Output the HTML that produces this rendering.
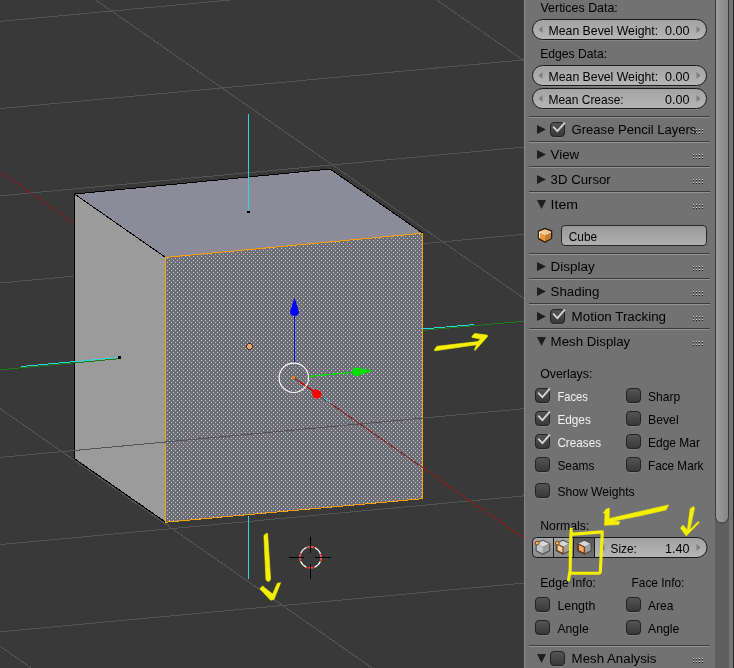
<!DOCTYPE html>
<html><head><meta charset="utf-8"><style>
html,body{margin:0;padding:0;background:#393939;overflow:hidden}
svg{display:block;will-change:transform}
text{font-family:"Liberation Sans",sans-serif}
</style></head><body>
<svg width="734" height="668" viewBox="0 0 734 668">
<g shape-rendering="crispEdges">
<rect x="0" y="0" width="524" height="668" fill="#393939"/>
<line x1="0.00" y1="21.40" x2="524.00" y2="-27.33" stroke="#545454" stroke-width="1"/>
<line x1="0.00" y1="108.60" x2="524.00" y2="59.87" stroke="#545454" stroke-width="1"/>
<line x1="0.00" y1="195.80" x2="524.00" y2="147.07" stroke="#545454" stroke-width="1"/>
<line x1="0.00" y1="283.00" x2="524.00" y2="234.27" stroke="#545454" stroke-width="1"/>
<line x1="0.00" y1="457.40" x2="524.00" y2="408.67" stroke="#545454" stroke-width="1"/>
<line x1="0.00" y1="544.60" x2="524.00" y2="495.87" stroke="#545454" stroke-width="1"/>
<line x1="0.00" y1="631.80" x2="524.00" y2="583.07" stroke="#545454" stroke-width="1"/>
<line x1="-927.20" y1="0.00" x2="77.10" y2="700.00" stroke="#545454" stroke-width="1"/>
<line x1="-586.20" y1="0.00" x2="418.10" y2="700.00" stroke="#545454" stroke-width="1"/>
<line x1="95.80" y1="0.00" x2="1100.10" y2="700.00" stroke="#545454" stroke-width="1"/>
<line x1="436.80" y1="0.00" x2="1441.10" y2="700.00" stroke="#545454" stroke-width="1"/>
<line x1="0.00" y1="171.50" x2="300.00" y2="380.60" stroke="#7a1f1f" stroke-width="1"/>
<line x1="0.00" y1="369.80" x2="119.50" y2="358.70" stroke="#1f7a1f" stroke-width="1"/>
<line x1="422.40" y1="330.40" x2="524.00" y2="321.20" stroke="#1f7a1f" stroke-width="1"/>
<polygon points="74.50,194.00 330.00,169.00 422.80,233.20 165.60,257.40" fill="#8b8b99" stroke="#000" stroke-width="1" stroke-linejoin="round"/>
<polygon points="74.50,194.00 165.60,257.40 165.60,522.20 74.70,458.80" fill="#9b9b9b" stroke="#000" stroke-width="1" stroke-linejoin="round"/>
<defs><pattern id="stip" x="0" y="0" width="4" height="4" patternUnits="userSpaceOnUse"><rect x="0" y="0" width="4" height="4" fill="#6d6e76"/><rect x="1" y="0" width="1" height="1" fill="#c6c6cc"/><rect x="3" y="2" width="1" height="1" fill="#c6c6cc"/></pattern></defs>
<polygon points="165.60,257.40 422.80,233.20 422.80,498.70 165.60,522.20" fill="url(#stip)" stroke="#ffa000" stroke-width="1" stroke-linejoin="round"/>
<line x1="0.00" y1="369.80" x2="119.50" y2="358.70" stroke="#1f7a1f" stroke-width="1"/>
<line x1="0.00" y1="457.40" x2="524.00" y2="408.67" stroke="#545454" stroke-width="1"/>
<line x1="294.00" y1="378.00" x2="524.00" y2="538.31" stroke="#8a1f1f" stroke-width="1"/>
<line x1="248.50" y1="212.00" x2="248.50" y2="113.50" stroke="#33d6d6" stroke-width="1"/>
<line x1="118.50" y1="357.50" x2="21.50" y2="366.50" stroke="#33d6d6" stroke-width="1"/>
<line x1="422.50" y1="329.00" x2="474.50" y2="324.50" stroke="#33d6d6" stroke-width="1"/>
<line x1="248.50" y1="516.00" x2="248.50" y2="578.50" stroke="#33d6d6" stroke-width="1"/>
<line x1="322.80" y1="397.30" x2="330.00" y2="402.60" stroke="#33d6d6" stroke-width="1"/>
<rect x="247" y="211" width="3" height="2" fill="#000"/>
<rect x="118" y="356" width="3" height="3" fill="#000"/>
<circle cx="249.4" cy="346.6" r="3" fill="#e8a868" stroke="#3a2a1a" stroke-width="0.9"/>
<line x1="294.50" y1="364.00" x2="294.50" y2="312.00" stroke="#0000ff" stroke-width="1.3"/>
<path d="M294.5 297.5 L290.2 311.5 Q290 315.8 294.5 315.8 Q299 315.8 298.8 311.5 Z" fill="#0000ff" shape-rendering="auto"/>
<line x1="309.00" y1="376.40" x2="356.00" y2="372.00" stroke="#00e000" stroke-width="1.3"/>
<path d="M373.5 370.5 L356 367.6 Q352 367.8 352.3 372.2 Q352.8 376.6 356.8 376.2 Z" fill="#00e000" shape-rendering="auto"/>
<line x1="299.70" y1="381.60" x2="317.00" y2="393.80" stroke="#d00000" stroke-width="1.3"/>
<path d="M312.5 389.8 Q317 389 320.8 391.5 Q322.5 395 320 397.8 Q316.5 399.5 313.5 397.5 Q311.5 394 312.5 389.8 Z" fill="#ff0000" shape-rendering="auto"/>
<circle cx="293.8" cy="377.8" r="14.7" fill="none" stroke="#ffffff" stroke-width="1.1" shape-rendering="auto"/>
<rect x="292.3" y="376.3" width="3" height="3" fill="#f08000"/>
<circle cx="310.5" cy="557.4" r="10.6" fill="none" stroke="#ffffff" stroke-width="1.1" shape-rendering="auto"/>
<circle cx="310.5" cy="557.4" r="10.6" fill="none" stroke="#ff0000" stroke-width="1.1" stroke-dasharray="8.325 8.325" stroke-dashoffset="4.16" shape-rendering="auto"/>
<line x1="310.50" y1="537.00" x2="310.50" y2="552.50" stroke="#000" stroke-width="1.2"/>
<line x1="310.50" y1="563.50" x2="310.50" y2="579.00" stroke="#000" stroke-width="1.2"/>
<line x1="289.00" y1="557.40" x2="304.00" y2="557.40" stroke="#000" stroke-width="1.2"/>
<line x1="315.00" y1="557.40" x2="331.00" y2="557.40" stroke="#000" stroke-width="1.2"/>
</g>
<polygon points="434.20,350.00 436.90,346.30 477.60,341.60 480.60,339.10 472.10,337.40 471.90,336.40 474.60,333.40 487.20,335.10 487.60,336.40 475.00,350.60 474.40,349.80 476.50,344.80 435.10,350.80" fill="#f5f000" stroke="#f5f000" stroke-width="0.6" stroke-linejoin="round"/>
<polygon points="263.90,535.50 266.00,533.60 267.60,533.40 270.60,578.50 269.80,580.90 267.60,581.40 265.90,579.50" fill="#f5f000" stroke="#f5f000" stroke-width="0.6" stroke-linejoin="round"/>
<polygon points="259.80,588.70 262.50,586.00 272.60,594.10 277.30,583.30 280.70,582.70 274.00,599.50 270.60,600.20" fill="#f5f000" stroke="#f5f000" stroke-width="0.6" stroke-linejoin="round"/>
<rect x="524" y="0" width="210" height="668" fill="#727272"/>
<rect x="524" y="0" width="1" height="668" fill="#8a8a8a"/>
<defs><linearGradient id="gnum" x1="0" y1="0" x2="0" y2="1"><stop offset="0" stop-color="#a2a2a2"/><stop offset="1" stop-color="#b6b6b6"/></linearGradient><linearGradient id="gopt" x1="0" y1="0" x2="0" y2="1"><stop offset="0" stop-color="#555555"/><stop offset="1" stop-color="#383838"/></linearGradient><linearGradient id="gtxt" x1="0" y1="0" x2="0" y2="1"><stop offset="0" stop-color="#999999"/><stop offset="1" stop-color="#b0b0b0"/></linearGradient><linearGradient id="gtool" x1="0" y1="0" x2="0" y2="1"><stop offset="0" stop-color="#a8a8a8"/><stop offset="1" stop-color="#8a8a8a"/></linearGradient><linearGradient id="gtsel" x1="0" y1="0" x2="0" y2="1"><stop offset="0" stop-color="#575757"/><stop offset="1" stop-color="#737373"/></linearGradient><linearGradient id="gscr" x1="0" y1="0" x2="1" y2="0"><stop offset="0" stop-color="#9c9c9c"/><stop offset="1" stop-color="#868686"/></linearGradient></defs>
<text x="540.50" y="12.00" fill="#000" font-size="12.4" textLength="77.33" lengthAdjust="spacingAndGlyphs">Vertices Data:</text>
<rect x="541" y="40" width="157" height="1" fill="#878787"/>
<rect x="532.5" y="19.5" width="174" height="20" rx="10" fill="url(#gnum)" stroke="#191919" stroke-width="1"/>
<polygon points="543.00,29.50 538.00,29.50 543.00,29.50" fill="none" stroke="none" stroke-width="1" />
<polygon points="542.50,26.00 542.50,33.00 538.50,29.50" fill="#7e7e7e" stroke="none" stroke-width="1" />
<polygon points="696.50,26.00 696.50,33.00 700.50,29.50" fill="#7e7e7e" stroke="none" stroke-width="1" />
<text x="548.50" y="34.50" fill="#000" font-size="12.4" textLength="109.64" lengthAdjust="spacingAndGlyphs">Mean Bevel Weight:</text>
<text x="665.00" y="34.50" fill="#000" font-size="12.4" textLength="24.50" lengthAdjust="spacingAndGlyphs">0.00</text>
<text x="540.20" y="58.00" fill="#000" font-size="12.4" textLength="66.88" lengthAdjust="spacingAndGlyphs">Edges Data:</text>
<rect x="541" y="86" width="157" height="1" fill="#878787"/>
<rect x="532.5" y="65.5" width="174" height="20" rx="10" fill="url(#gnum)" stroke="#191919" stroke-width="1"/>
<polygon points="543.00,75.50 538.00,75.50 543.00,75.50" fill="none" stroke="none" stroke-width="1" />
<polygon points="542.50,72.00 542.50,79.00 538.50,75.50" fill="#7e7e7e" stroke="none" stroke-width="1" />
<polygon points="696.50,72.00 696.50,79.00 700.50,75.50" fill="#7e7e7e" stroke="none" stroke-width="1" />
<text x="548.50" y="80.50" fill="#000" font-size="12.4" textLength="109.64" lengthAdjust="spacingAndGlyphs">Mean Bevel Weight:</text>
<text x="665.00" y="80.50" fill="#000" font-size="12.4" textLength="24.50" lengthAdjust="spacingAndGlyphs">0.00</text>
<rect x="541" y="109" width="157" height="1" fill="#878787"/>
<rect x="532.5" y="88.5" width="174" height="20" rx="10" fill="url(#gnum)" stroke="#191919" stroke-width="1"/>
<polygon points="543.00,98.50 538.00,98.50 543.00,98.50" fill="none" stroke="none" stroke-width="1" />
<polygon points="542.50,95.00 542.50,102.00 538.50,98.50" fill="#7e7e7e" stroke="none" stroke-width="1" />
<polygon points="696.50,95.00 696.50,102.00 700.50,98.50" fill="#7e7e7e" stroke="none" stroke-width="1" />
<text x="548.50" y="103.50" fill="#000" font-size="12.4" textLength="75.12" lengthAdjust="spacingAndGlyphs">Mean Crease:</text>
<text x="665.00" y="103.50" fill="#000" font-size="12.4" textLength="24.50" lengthAdjust="spacingAndGlyphs">0.00</text>
<rect x="529" y="116" width="181" height="1" fill="#3c3c3c"/>
<rect x="529" y="117" width="181" height="1" fill="#939393"/>
<polygon points="537.00,125.00 537.00,134.00 546.00,129.50" fill="#1e1e1e" stroke="none" stroke-width="1" />
<rect x="553" y="137" width="9" height="1" fill="#828282"/>
<rect x="550.5" y="122.5" width="14" height="14" rx="3.5" fill="url(#gopt)" stroke="#222" stroke-width="1"/>
<path d="M553.6 127.2 L557.4 131.2 L564.4 123.1" fill="none" stroke="#d6d6d6" stroke-width="1.8" stroke-linecap="round"/>
<text x="571.60" y="134.00" fill="#000" font-size="13.52727272727273" textLength="124.78" lengthAdjust="spacingAndGlyphs">Grease Pencil Layers</text>
<rect x="693" y="129" width="1" height="1" fill="#d0d0d0"/>
<rect x="693" y="130" width="1" height="1" fill="#1a1a1a"/>
<rect x="693" y="132" width="1" height="1" fill="#d0d0d0"/>
<rect x="693" y="133" width="1" height="1" fill="#1a1a1a"/>
<rect x="696" y="129" width="1" height="1" fill="#d0d0d0"/>
<rect x="696" y="130" width="1" height="1" fill="#1a1a1a"/>
<rect x="696" y="132" width="1" height="1" fill="#d0d0d0"/>
<rect x="696" y="133" width="1" height="1" fill="#1a1a1a"/>
<rect x="699" y="129" width="1" height="1" fill="#d0d0d0"/>
<rect x="699" y="130" width="1" height="1" fill="#1a1a1a"/>
<rect x="699" y="132" width="1" height="1" fill="#d0d0d0"/>
<rect x="699" y="133" width="1" height="1" fill="#1a1a1a"/>
<rect x="702" y="129" width="1" height="1" fill="#d0d0d0"/>
<rect x="702" y="130" width="1" height="1" fill="#1a1a1a"/>
<rect x="702" y="132" width="1" height="1" fill="#d0d0d0"/>
<rect x="702" y="133" width="1" height="1" fill="#1a1a1a"/>
<rect x="529" y="141" width="181" height="1" fill="#3c3c3c"/>
<rect x="529" y="142" width="181" height="1" fill="#939393"/>
<polygon points="537.00,150.00 537.00,159.00 546.00,154.50" fill="#1e1e1e" stroke="none" stroke-width="1" />
<text x="550.60" y="159.00" fill="#000" font-size="13.52727272727273" textLength="28.47" lengthAdjust="spacingAndGlyphs">View</text>
<rect x="693" y="154" width="1" height="1" fill="#d0d0d0"/>
<rect x="693" y="155" width="1" height="1" fill="#1a1a1a"/>
<rect x="693" y="157" width="1" height="1" fill="#d0d0d0"/>
<rect x="693" y="158" width="1" height="1" fill="#1a1a1a"/>
<rect x="696" y="154" width="1" height="1" fill="#d0d0d0"/>
<rect x="696" y="155" width="1" height="1" fill="#1a1a1a"/>
<rect x="696" y="157" width="1" height="1" fill="#d0d0d0"/>
<rect x="696" y="158" width="1" height="1" fill="#1a1a1a"/>
<rect x="699" y="154" width="1" height="1" fill="#d0d0d0"/>
<rect x="699" y="155" width="1" height="1" fill="#1a1a1a"/>
<rect x="699" y="157" width="1" height="1" fill="#d0d0d0"/>
<rect x="699" y="158" width="1" height="1" fill="#1a1a1a"/>
<rect x="702" y="154" width="1" height="1" fill="#d0d0d0"/>
<rect x="702" y="155" width="1" height="1" fill="#1a1a1a"/>
<rect x="702" y="157" width="1" height="1" fill="#d0d0d0"/>
<rect x="702" y="158" width="1" height="1" fill="#1a1a1a"/>
<rect x="529" y="166" width="181" height="1" fill="#3c3c3c"/>
<rect x="529" y="167" width="181" height="1" fill="#939393"/>
<polygon points="537.00,175.00 537.00,184.00 546.00,179.50" fill="#1e1e1e" stroke="none" stroke-width="1" />
<text x="550.60" y="184.00" fill="#000" font-size="13.52727272727273" textLength="60.14" lengthAdjust="spacingAndGlyphs">3D Cursor</text>
<rect x="693" y="179" width="1" height="1" fill="#d0d0d0"/>
<rect x="693" y="180" width="1" height="1" fill="#1a1a1a"/>
<rect x="693" y="182" width="1" height="1" fill="#d0d0d0"/>
<rect x="693" y="183" width="1" height="1" fill="#1a1a1a"/>
<rect x="696" y="179" width="1" height="1" fill="#d0d0d0"/>
<rect x="696" y="180" width="1" height="1" fill="#1a1a1a"/>
<rect x="696" y="182" width="1" height="1" fill="#d0d0d0"/>
<rect x="696" y="183" width="1" height="1" fill="#1a1a1a"/>
<rect x="699" y="179" width="1" height="1" fill="#d0d0d0"/>
<rect x="699" y="180" width="1" height="1" fill="#1a1a1a"/>
<rect x="699" y="182" width="1" height="1" fill="#d0d0d0"/>
<rect x="699" y="183" width="1" height="1" fill="#1a1a1a"/>
<rect x="702" y="179" width="1" height="1" fill="#d0d0d0"/>
<rect x="702" y="180" width="1" height="1" fill="#1a1a1a"/>
<rect x="702" y="182" width="1" height="1" fill="#d0d0d0"/>
<rect x="702" y="183" width="1" height="1" fill="#1a1a1a"/>
<rect x="529" y="191" width="181" height="1" fill="#3c3c3c"/>
<rect x="529" y="192" width="181" height="1" fill="#939393"/>
<polygon points="537.00,200.00 546.00,200.00 541.50,209.00" fill="#1e1e1e" stroke="none" stroke-width="1" />
<text x="550.60" y="209.00" fill="#000" font-size="13.52727272727273" textLength="27.33" lengthAdjust="spacingAndGlyphs">Item</text>
<rect x="693" y="204" width="1" height="1" fill="#d0d0d0"/>
<rect x="693" y="205" width="1" height="1" fill="#1a1a1a"/>
<rect x="693" y="207" width="1" height="1" fill="#d0d0d0"/>
<rect x="693" y="208" width="1" height="1" fill="#1a1a1a"/>
<rect x="696" y="204" width="1" height="1" fill="#d0d0d0"/>
<rect x="696" y="205" width="1" height="1" fill="#1a1a1a"/>
<rect x="696" y="207" width="1" height="1" fill="#d0d0d0"/>
<rect x="696" y="208" width="1" height="1" fill="#1a1a1a"/>
<rect x="699" y="204" width="1" height="1" fill="#d0d0d0"/>
<rect x="699" y="205" width="1" height="1" fill="#1a1a1a"/>
<rect x="699" y="207" width="1" height="1" fill="#d0d0d0"/>
<rect x="699" y="208" width="1" height="1" fill="#1a1a1a"/>
<rect x="702" y="204" width="1" height="1" fill="#d0d0d0"/>
<rect x="702" y="205" width="1" height="1" fill="#1a1a1a"/>
<rect x="702" y="207" width="1" height="1" fill="#d0d0d0"/>
<rect x="702" y="208" width="1" height="1" fill="#1a1a1a"/>
<rect x="529" y="253" width="181" height="1" fill="#3c3c3c"/>
<rect x="529" y="254" width="181" height="1" fill="#939393"/>
<polygon points="537.00,262.00 537.00,271.00 546.00,266.50" fill="#1e1e1e" stroke="none" stroke-width="1" />
<text x="550.60" y="271.00" fill="#000" font-size="13.52727272727273" textLength="44.23" lengthAdjust="spacingAndGlyphs">Display</text>
<rect x="693" y="266" width="1" height="1" fill="#d0d0d0"/>
<rect x="693" y="267" width="1" height="1" fill="#1a1a1a"/>
<rect x="693" y="269" width="1" height="1" fill="#d0d0d0"/>
<rect x="693" y="270" width="1" height="1" fill="#1a1a1a"/>
<rect x="696" y="266" width="1" height="1" fill="#d0d0d0"/>
<rect x="696" y="267" width="1" height="1" fill="#1a1a1a"/>
<rect x="696" y="269" width="1" height="1" fill="#d0d0d0"/>
<rect x="696" y="270" width="1" height="1" fill="#1a1a1a"/>
<rect x="699" y="266" width="1" height="1" fill="#d0d0d0"/>
<rect x="699" y="267" width="1" height="1" fill="#1a1a1a"/>
<rect x="699" y="269" width="1" height="1" fill="#d0d0d0"/>
<rect x="699" y="270" width="1" height="1" fill="#1a1a1a"/>
<rect x="702" y="266" width="1" height="1" fill="#d0d0d0"/>
<rect x="702" y="267" width="1" height="1" fill="#1a1a1a"/>
<rect x="702" y="269" width="1" height="1" fill="#d0d0d0"/>
<rect x="702" y="270" width="1" height="1" fill="#1a1a1a"/>
<rect x="529" y="278" width="181" height="1" fill="#3c3c3c"/>
<rect x="529" y="279" width="181" height="1" fill="#939393"/>
<polygon points="537.00,287.00 537.00,296.00 546.00,291.50" fill="#1e1e1e" stroke="none" stroke-width="1" />
<text x="550.60" y="296.00" fill="#000" font-size="13.52727272727273" textLength="48.78" lengthAdjust="spacingAndGlyphs">Shading</text>
<rect x="693" y="291" width="1" height="1" fill="#d0d0d0"/>
<rect x="693" y="292" width="1" height="1" fill="#1a1a1a"/>
<rect x="693" y="294" width="1" height="1" fill="#d0d0d0"/>
<rect x="693" y="295" width="1" height="1" fill="#1a1a1a"/>
<rect x="696" y="291" width="1" height="1" fill="#d0d0d0"/>
<rect x="696" y="292" width="1" height="1" fill="#1a1a1a"/>
<rect x="696" y="294" width="1" height="1" fill="#d0d0d0"/>
<rect x="696" y="295" width="1" height="1" fill="#1a1a1a"/>
<rect x="699" y="291" width="1" height="1" fill="#d0d0d0"/>
<rect x="699" y="292" width="1" height="1" fill="#1a1a1a"/>
<rect x="699" y="294" width="1" height="1" fill="#d0d0d0"/>
<rect x="699" y="295" width="1" height="1" fill="#1a1a1a"/>
<rect x="702" y="291" width="1" height="1" fill="#d0d0d0"/>
<rect x="702" y="292" width="1" height="1" fill="#1a1a1a"/>
<rect x="702" y="294" width="1" height="1" fill="#d0d0d0"/>
<rect x="702" y="295" width="1" height="1" fill="#1a1a1a"/>
<rect x="529" y="303" width="181" height="1" fill="#3c3c3c"/>
<rect x="529" y="304" width="181" height="1" fill="#939393"/>
<polygon points="537.00,312.00 537.00,321.00 546.00,316.50" fill="#1e1e1e" stroke="none" stroke-width="1" />
<rect x="553" y="324" width="9" height="1" fill="#828282"/>
<rect x="550.5" y="309.5" width="14" height="14" rx="3.5" fill="url(#gopt)" stroke="#222" stroke-width="1"/>
<path d="M553.6 314.2 L557.4 318.2 L564.4 310.1" fill="none" stroke="#d6d6d6" stroke-width="1.8" stroke-linecap="round"/>
<text x="571.60" y="321.00" fill="#000" font-size="13.52727272727273" textLength="94.47" lengthAdjust="spacingAndGlyphs">Motion Tracking</text>
<rect x="693" y="316" width="1" height="1" fill="#d0d0d0"/>
<rect x="693" y="317" width="1" height="1" fill="#1a1a1a"/>
<rect x="693" y="319" width="1" height="1" fill="#d0d0d0"/>
<rect x="693" y="320" width="1" height="1" fill="#1a1a1a"/>
<rect x="696" y="316" width="1" height="1" fill="#d0d0d0"/>
<rect x="696" y="317" width="1" height="1" fill="#1a1a1a"/>
<rect x="696" y="319" width="1" height="1" fill="#d0d0d0"/>
<rect x="696" y="320" width="1" height="1" fill="#1a1a1a"/>
<rect x="699" y="316" width="1" height="1" fill="#d0d0d0"/>
<rect x="699" y="317" width="1" height="1" fill="#1a1a1a"/>
<rect x="699" y="319" width="1" height="1" fill="#d0d0d0"/>
<rect x="699" y="320" width="1" height="1" fill="#1a1a1a"/>
<rect x="702" y="316" width="1" height="1" fill="#d0d0d0"/>
<rect x="702" y="317" width="1" height="1" fill="#1a1a1a"/>
<rect x="702" y="319" width="1" height="1" fill="#d0d0d0"/>
<rect x="702" y="320" width="1" height="1" fill="#1a1a1a"/>
<rect x="529" y="328" width="181" height="1" fill="#3c3c3c"/>
<rect x="529" y="329" width="181" height="1" fill="#939393"/>
<polygon points="537.00,337.00 546.00,337.00 541.50,346.00" fill="#1e1e1e" stroke="none" stroke-width="1" />
<text x="550.60" y="346.00" fill="#000" font-size="13.52727272727273" textLength="79.66" lengthAdjust="spacingAndGlyphs">Mesh Display</text>
<rect x="693" y="341" width="1" height="1" fill="#d0d0d0"/>
<rect x="693" y="342" width="1" height="1" fill="#1a1a1a"/>
<rect x="693" y="344" width="1" height="1" fill="#d0d0d0"/>
<rect x="693" y="345" width="1" height="1" fill="#1a1a1a"/>
<rect x="696" y="341" width="1" height="1" fill="#d0d0d0"/>
<rect x="696" y="342" width="1" height="1" fill="#1a1a1a"/>
<rect x="696" y="344" width="1" height="1" fill="#d0d0d0"/>
<rect x="696" y="345" width="1" height="1" fill="#1a1a1a"/>
<rect x="699" y="341" width="1" height="1" fill="#d0d0d0"/>
<rect x="699" y="342" width="1" height="1" fill="#1a1a1a"/>
<rect x="699" y="344" width="1" height="1" fill="#d0d0d0"/>
<rect x="699" y="345" width="1" height="1" fill="#1a1a1a"/>
<rect x="702" y="341" width="1" height="1" fill="#d0d0d0"/>
<rect x="702" y="342" width="1" height="1" fill="#1a1a1a"/>
<rect x="702" y="344" width="1" height="1" fill="#d0d0d0"/>
<rect x="702" y="345" width="1" height="1" fill="#1a1a1a"/>
<rect x="529" y="645" width="181" height="1" fill="#3c3c3c"/>
<rect x="529" y="646" width="181" height="1" fill="#939393"/>
<polygon points="537.00,654.00 546.00,654.00 541.50,663.00" fill="#1e1e1e" stroke="none" stroke-width="1" />
<rect x="553" y="666" width="9" height="1" fill="#828282"/>
<rect x="550.5" y="651.5" width="14" height="14" rx="3.5" fill="url(#gopt)" stroke="#222" stroke-width="1"/>
<text x="571.60" y="663.00" fill="#000" font-size="13.52727272727273" textLength="84.86" lengthAdjust="spacingAndGlyphs">Mesh Analysis</text>
<rect x="693" y="658" width="1" height="1" fill="#d0d0d0"/>
<rect x="693" y="659" width="1" height="1" fill="#1a1a1a"/>
<rect x="693" y="661" width="1" height="1" fill="#d0d0d0"/>
<rect x="693" y="662" width="1" height="1" fill="#1a1a1a"/>
<rect x="696" y="658" width="1" height="1" fill="#d0d0d0"/>
<rect x="696" y="659" width="1" height="1" fill="#1a1a1a"/>
<rect x="696" y="661" width="1" height="1" fill="#d0d0d0"/>
<rect x="696" y="662" width="1" height="1" fill="#1a1a1a"/>
<rect x="699" y="658" width="1" height="1" fill="#d0d0d0"/>
<rect x="699" y="659" width="1" height="1" fill="#1a1a1a"/>
<rect x="699" y="661" width="1" height="1" fill="#d0d0d0"/>
<rect x="699" y="662" width="1" height="1" fill="#1a1a1a"/>
<rect x="702" y="658" width="1" height="1" fill="#d0d0d0"/>
<rect x="702" y="659" width="1" height="1" fill="#1a1a1a"/>
<rect x="702" y="661" width="1" height="1" fill="#d0d0d0"/>
<rect x="702" y="662" width="1" height="1" fill="#1a1a1a"/>
<polygon points="545,228.3 551.8,230.8 551.8,238.5 545,242.4 538.3,238.8 538.3,230.8" fill="#2a1a0a" stroke="#2a1a0a" stroke-width="1" stroke-linejoin="round"/>
<polygon points="545,229.3 551,231.6 545,234.2 539.2,231.6" fill="#f6c994"/>
<polygon points="539.2,231.6 545,234.2 545,241.6 539.2,238.3" fill="#e8993c"/>
<polygon points="545,234.2 551,231.6 551,238.3 545,241.6" fill="#c97a2c"/>
<path d="M539.5 238 L539.5 232 L545.3 234.5 L551 232" fill="none" stroke="#fff0dc" stroke-width="1"/>
<rect x="561.5" y="225.5" width="145" height="20" rx="3.5" fill="url(#gtxt)" stroke="#262626"/>
<text x="568.70" y="240.50" fill="#000" font-size="12.4" textLength="28.41" lengthAdjust="spacingAndGlyphs">Cube</text>
<text x="540.20" y="377.50" fill="#000" font-size="12.4" textLength="52.20" lengthAdjust="spacingAndGlyphs">Overlays:</text>
<rect x="538" y="403" width="9" height="1" fill="#828282"/>
<rect x="535.5" y="388.5" width="14" height="14" rx="3.5" fill="url(#gopt)" stroke="#222" stroke-width="1"/>
<path d="M538.6 393.2 L542.4 397.2 L549.4 389.1" fill="none" stroke="#d6d6d6" stroke-width="1.8" stroke-linecap="round"/>
<text x="557.40" y="400.60" fill="#f2f2f2" font-size="12.4" textLength="30.59" lengthAdjust="spacingAndGlyphs">Faces</text>
<rect x="629" y="403" width="9" height="1" fill="#828282"/>
<rect x="626.5" y="388.5" width="14" height="14" rx="3.5" fill="url(#gopt)" stroke="#222" stroke-width="1"/>
<text x="648.00" y="400.60" fill="#000" font-size="12.4" textLength="32.19" lengthAdjust="spacingAndGlyphs">Sharp</text>
<rect x="538" y="426" width="9" height="1" fill="#828282"/>
<rect x="535.5" y="411.5" width="14" height="14" rx="3.5" fill="url(#gopt)" stroke="#222" stroke-width="1"/>
<path d="M538.6 416.2 L542.4 420.2 L549.4 412.1" fill="none" stroke="#d6d6d6" stroke-width="1.8" stroke-linecap="round"/>
<text x="557.40" y="423.60" fill="#f2f2f2" font-size="12.4" textLength="33.42" lengthAdjust="spacingAndGlyphs">Edges</text>
<rect x="629" y="426" width="9" height="1" fill="#828282"/>
<rect x="626.5" y="411.5" width="14" height="14" rx="3.5" fill="url(#gopt)" stroke="#222" stroke-width="1"/>
<text x="648.00" y="423.60" fill="#000" font-size="12.4" textLength="30.66" lengthAdjust="spacingAndGlyphs">Bevel</text>
<rect x="538" y="449" width="9" height="1" fill="#828282"/>
<rect x="535.5" y="434.5" width="14" height="14" rx="3.5" fill="url(#gopt)" stroke="#222" stroke-width="1"/>
<path d="M538.6 439.2 L542.4 443.2 L549.4 435.1" fill="none" stroke="#d6d6d6" stroke-width="1.8" stroke-linecap="round"/>
<text x="557.40" y="446.60" fill="#f2f2f2" font-size="12.4" textLength="43.70" lengthAdjust="spacingAndGlyphs">Creases</text>
<rect x="629" y="449" width="9" height="1" fill="#828282"/>
<rect x="626.5" y="434.5" width="14" height="14" rx="3.5" fill="url(#gopt)" stroke="#222" stroke-width="1"/>
<text x="648.00" y="446.60" fill="#000" font-size="12.4" textLength="51.92" lengthAdjust="spacingAndGlyphs">Edge Mar</text>
<rect x="538" y="472" width="9" height="1" fill="#828282"/>
<rect x="535.5" y="457.5" width="14" height="14" rx="3.5" fill="url(#gopt)" stroke="#222" stroke-width="1"/>
<text x="557.40" y="469.60" fill="#000" font-size="12.4" textLength="36.94" lengthAdjust="spacingAndGlyphs">Seams</text>
<rect x="629" y="472" width="9" height="1" fill="#828282"/>
<rect x="626.5" y="457.5" width="14" height="14" rx="3.5" fill="url(#gopt)" stroke="#222" stroke-width="1"/>
<text x="648.00" y="469.60" fill="#000" font-size="12.4" textLength="55.47" lengthAdjust="spacingAndGlyphs">Face Mark</text>
<rect x="538" y="498" width="9" height="1" fill="#828282"/>
<rect x="535.5" y="483.5" width="14" height="14" rx="3.5" fill="url(#gopt)" stroke="#222" stroke-width="1"/>
<text x="557.40" y="495.60" fill="#000" font-size="12.4" textLength="77.25" lengthAdjust="spacingAndGlyphs">Show Weights</text>
<text x="540.20" y="529.50" fill="#000" font-size="12.4" textLength="49.25" lengthAdjust="spacingAndGlyphs">Normals:</text>
<rect x="532.5" y="537.5" width="62" height="20" rx="4" fill="url(#gtool)" stroke="#191919"/>
<rect x="573.5" y="537.5" width="21" height="20" fill="url(#gtsel)" stroke="#191919"/>
<rect x="553" y="538" width="1" height="19" fill="#191919"/>
<path d="M594.5 537.5 L697 537.5 A10 10 0 0 1 697 557.5 L594.5 557.5 Z" fill="url(#gnum)" stroke="#191919"/>
<polygon points="604.50,544.00 604.50,551.00 600.50,547.50" fill="#7e7e7e" stroke="none" stroke-width="1" />
<polygon points="696.50,544.00 696.50,551.00 700.50,547.50" fill="#7e7e7e" stroke="none" stroke-width="1" />
<text x="610.50" y="552.50" fill="#000" font-size="12.4" textLength="26.30" lengthAdjust="spacingAndGlyphs">Size:</text>
<text x="665.00" y="552.50" fill="#000" font-size="12.4" textLength="24.50" lengthAdjust="spacingAndGlyphs">1.40</text>
<polygon points="542.9,540 549.9,543.5 549.9,551 542.9,554.4 535.9,551 535.9,543.5" fill="#4a4a4a" stroke="#4a4a4a" stroke-width="0.6" stroke-linejoin="round"/>
<polygon points="542.9,540.8 549.1,543.7 542.9,547 536.6999999999999,543.7" fill="#d6d6d6"/>
<polygon points="549.1,543.7 542.9,547 542.9,553.6 549.1,550.6" fill="#9e9e9e"/>
<polygon points="536.6999999999999,543.7 542.9,547 542.9,553.6 536.6999999999999,550.6" fill="#c4c4c4"/>
<circle cx="537.1999999999999" cy="543.1" r="1.9" fill="#f9b060" stroke="#7a3c08" stroke-width="0.9"/>
<polygon points="563,540 570,543.5 570,551 563,554.4 556,551 556,543.5" fill="#4a4a4a" stroke="#4a4a4a" stroke-width="0.6" stroke-linejoin="round"/>
<polygon points="563,540.8 569.2,543.7 563,547 556.8,543.7" fill="#d6d6d6"/>
<polygon points="569.2,543.7 563,547 563,553.6 569.2,550.6" fill="#9e9e9e"/>
<polygon points="557,544 563,547 563,553.6 557,550.6" fill="#efcf9f" stroke="#7a3c08" stroke-width="1.1" stroke-linejoin="round"/>
<circle cx="557.3" cy="543.1" r="1.9" fill="#f9b060" stroke="#7a3c08" stroke-width="0.9"/>
<polygon points="584.3,540 591.3,543.5 591.3,551 584.3,554.4 577.3,551 577.3,543.5" fill="#4a4a4a" stroke="#4a4a4a" stroke-width="0.6" stroke-linejoin="round"/>
<polygon points="584.3,540.8 590.5,543.7 584.3,547 578.0999999999999,543.7" fill="#d6d6d6"/>
<polygon points="590.5,543.7 584.3,547 584.3,553.6 590.5,550.6" fill="#9e9e9e"/>
<polygon points="578.3,544 584.3,547 584.3,553.6 578.3,550.6" fill="#f9a963" stroke="#6a3408" stroke-width="1.1" stroke-linejoin="round"/>
<text x="540.20" y="586.50" fill="#000" font-size="12.4" textLength="55.72" lengthAdjust="spacingAndGlyphs">Edge Info:</text>
<text x="631.50" y="586.50" fill="#000" font-size="12.4" textLength="52.89" lengthAdjust="spacingAndGlyphs">Face Info:</text>
<rect x="538" y="612" width="9" height="1" fill="#828282"/>
<rect x="535.5" y="597.5" width="14" height="14" rx="3.5" fill="url(#gopt)" stroke="#222" stroke-width="1"/>
<text x="557.40" y="609.60" fill="#000" font-size="12.4" textLength="37.94" lengthAdjust="spacingAndGlyphs">Length</text>
<rect x="629" y="612" width="9" height="1" fill="#828282"/>
<rect x="626.5" y="597.5" width="14" height="14" rx="3.5" fill="url(#gopt)" stroke="#222" stroke-width="1"/>
<text x="648.00" y="609.60" fill="#000" font-size="12.4" textLength="25.31" lengthAdjust="spacingAndGlyphs">Area</text>
<rect x="538" y="635" width="9" height="1" fill="#828282"/>
<rect x="535.5" y="620.5" width="14" height="14" rx="3.5" fill="url(#gopt)" stroke="#222" stroke-width="1"/>
<text x="557.40" y="632.60" fill="#000" font-size="12.4" textLength="31.31" lengthAdjust="spacingAndGlyphs">Angle</text>
<rect x="629" y="635" width="9" height="1" fill="#828282"/>
<rect x="626.5" y="620.5" width="14" height="14" rx="3.5" fill="url(#gopt)" stroke="#222" stroke-width="1"/>
<text x="648.00" y="632.60" fill="#000" font-size="12.4" textLength="31.31" lengthAdjust="spacingAndGlyphs">Angle</text>
<rect x="715" y="0" width="14" height="668" fill="#5e5e5e"/>
<rect x="715.5" y="-10" width="13" height="533" rx="6.5" fill="url(#gscr)" stroke="#3a3a3a"/>
<rect x="729" y="0" width="4" height="668" fill="#737373"/>
<rect x="733" y="0" width="1" height="668" fill="#2a2a2a"/>
<path d="M571.2 529 L570.5 545 L570.2 570 L568.5 580 M570.7 534.4 L602.3 531.9 L600.3 572 Q599.8 573.3 598.5 573.3 L570.7 573.2" fill="none" stroke="#f5f000" stroke-width="3.1" stroke-linecap="round" stroke-linejoin="round"/>
<polygon points="603.20,513.10 606.20,509.00 609.40,508.20 609.20,518.60 668.60,504.90 666.00,510.00 638.00,516.30 613.80,521.00 619.80,521.80 618.70,524.50 604.50,525.30 605.00,513.10" fill="#f5f000" stroke="#f5f000" stroke-width="0.6" stroke-linejoin="round"/>
<polygon points="690.10,509.00 693.10,506.60 694.60,507.80 689.80,529.90 698.10,521.60 699.30,522.50 686.20,535.90 680.50,528.10 682.90,525.10 687.40,529.90" fill="#f5f000" stroke="#f5f000" stroke-width="0.6" stroke-linejoin="round"/>
</svg>
</body></html>
